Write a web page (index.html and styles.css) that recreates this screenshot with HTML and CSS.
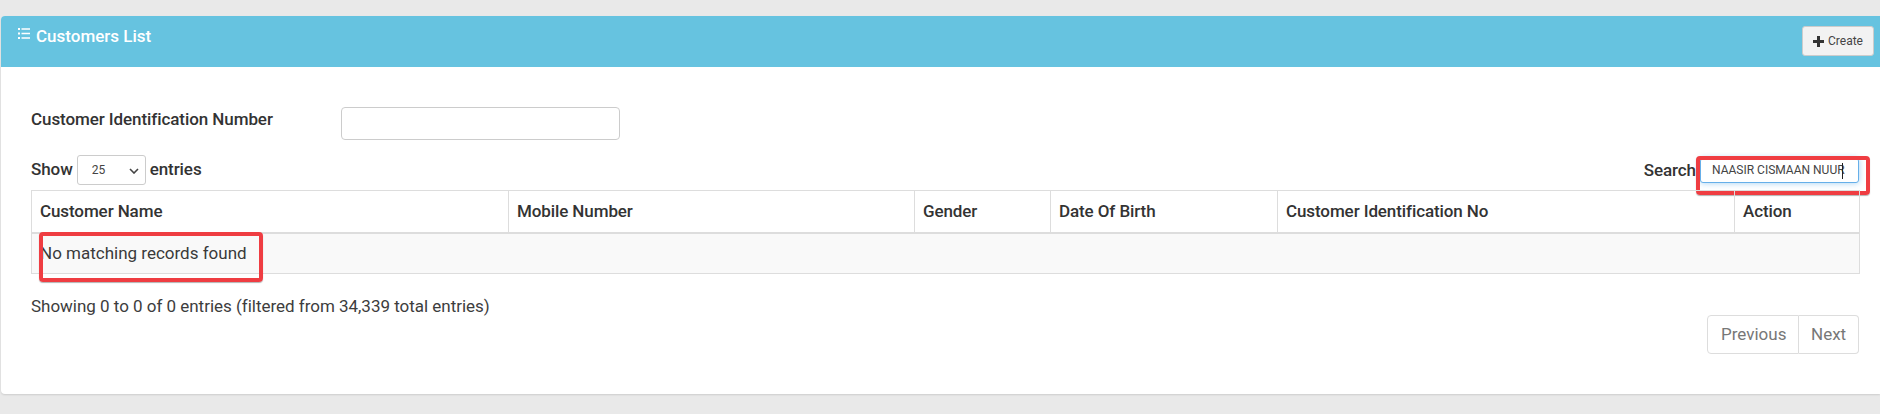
FILE: index.html
```html
<!DOCTYPE html>
<html lang="en">
<head>
<meta charset="utf-8">
<title>Customers List</title>
<link rel="stylesheet" href="styles.css">
</head>
<body>
<main class="card">
  <header class="card-head">
    <h1 class="card-title">
      <svg class="list-icon" width="12" height="11" viewBox="0 0 12 11" aria-hidden="true"><path fill="#fff" d="M0 0h2v2H0zM3.500 .2H12v1.600H3.500zM0 4.500h2v2H0zM3.500 4.700H12v1.600H3.500zM0 9h2v2H0zM3.500 9.200H12v1.600H3.500z"/></svg>
      Customers List
    </h1>
    <button class="btn-create" type="button">
      <svg width="11" height="11" viewBox="0 0 11 11" aria-hidden="true"><path fill="#333" d="M4 0h3v4h4v3H7v4H4V7H0V4h4z"/></svg>
      Create
    </button>
  </header>
  <div class="card-body">
    <div class="filter-row">
      <label class="filter-label" for="cid">Customer Identification Number</label>
      <input class="filter-input" id="cid" type="text">
    </div>
    <div class="tools-row">
      <div class="length">
        <span>Show</span>
        <span class="select-wrap">
          <select class="length-select"><option>25</option></select>
          <svg class="chevron" width="10" height="6" viewBox="0 0 10 6" aria-hidden="true"><path fill="none" stroke="#444" stroke-width="1.600" d="M1 1l4 4 4-4"/></svg>
        </span>
        <span>entries</span>
      </div>
      <div class="search">
        <span>Search</span>
        <span class="search-wrap">
          <input class="search-input" type="text" value="NAASIR CISMAAN NUUR">
          <span class="caret"></span>
        </span>
        <span class="mark mark-search"></span>
      </div>
    </div>
    <div class="table-wrap">
      <table class="data-table">
        <colgroup>
          <col class="c1"><col class="c2"><col class="c3"><col class="c4"><col class="c5"><col class="c6">
        </colgroup>
        <thead>
          <tr>
            <th>Customer Name</th>
            <th>Mobile Number</th>
            <th>Gender</th>
            <th>Date Of Birth</th>
            <th>Customer Identification No</th>
            <th>Action</th>
          </tr>
        </thead>
        <tbody>
          <tr><td colspan="6">No matching records found</td></tr>
        </tbody>
      </table>
      <span class="mark mark-empty"></span>
    </div>
    <p class="info">Showing 0 to 0 of 0 entries (filtered from 34,339 total entries)</p>
    <nav class="pager">
      <a class="page">Previous</a>
      <a class="page">Next</a>
    </nav>
  </div>
</main>
</body>
</html>
```
FILE: styles.css
```css
* { box-sizing: border-box; }
html, body { margin: 0; height: 414px; overflow: hidden; }
body {
  background: #e9e9e9;
  padding: 16px 0 0 1px;
  font-family: Roboto, "Liberation Sans", sans-serif;
  font-size: 17px;
  color: #333;
}
.card {
  height: 378px;
  background: #fff;
  border-radius: 4px 0 0 4px;
  box-shadow: 0 1px 2px rgba(0,0,0,.12);
  overflow: hidden;
}
.card-head {
  height: 51px;
  background: #66c3e0;
  display: flex;
  justify-content: space-between;
  align-items: flex-start;
  padding: 10px 6px 0 17px;
}
.card-title {
  margin: 0;
  display: flex;
  align-items: flex-start;
  gap: 6px;
  font-size: 17px;
  font-weight: 500;
  line-height: 20px;
  color: #fff;
}
.list-icon { margin-top: 2px; }
.btn-create {
  width: 72px;
  height: 30px;
  background: #f2f2f2;
  border: 1px solid #ccc;
  border-radius: 3px;
  display: flex;
  align-items: center;
  justify-content: center;
  gap: 4px;
  padding: 0;
  font: 12px Roboto, sans-serif;
  color: #444;
}
.card-body { padding: 39px 21px 0 30px; position: relative; }
.filter-row { display: flex; align-items: flex-start; height: 34px; padding-top: 1px; }
.filter-label {
  width: 310px;
  font-weight: 500;
  line-height: 24px;
  letter-spacing: -.08px;
}
.filter-input {
  width: 279px;
  height: 33px;
  border: 1px solid #ccc;
  border-radius: 4px;
  background: #fff;
}
.tools-row {
  margin-top: 15px;
  height: 35px;
  display: flex;
  justify-content: space-between;
  align-items: flex-start;
  font-weight: 500;
  letter-spacing: -.08px;
}
.length { display: flex; align-items: center; gap: 4px; height: 30px; line-height: 26px; padding-bottom: 2px; }
.select-wrap { position: relative; display: block; height: 30px; margin-top: 2px; }
.length-select {
  appearance: none;
  width: 69px;
  height: 30px;
  border: 1px solid #ccc;
  border-radius: 3px;
  background: #fff;
  padding: 0 0 0 14px;
  font: 12px Roboto, sans-serif;
  color: #444;
}
.chevron { position: absolute; right: 7px; top: 13px; pointer-events: none; }
.search { display: flex; align-items: center; gap: 4px; height: 30px; position: relative; line-height: 26px; }
.search-wrap { position: relative; display: block; }
.search-input {
  display: block;
  width: 159px;
  height: 25px;
  border: 1px solid #66afe9;
  border-radius: 3px;
  outline: 0;
  box-shadow: 0 0 6px rgba(102,175,233,.6);
  padding: 0 0 0 11px;
  font: 12px Roboto, sans-serif;
  color: #444;
}
.caret {
  position: absolute;
  left: 142px;
  top: 5px;
  width: 1px;
  height: 16px;
  background: #222;
}
.mark {
  position: absolute;
  border: 4px solid #ef3d42;
  border-radius: 4px;
  pointer-events: none;
  box-shadow: 0 1px 1px rgba(0,0,0,.3);
}
.mark-search { right: -11px; top: 1px; width: 174px; height: 39px; }
.table-wrap { position: relative; }
.data-table {
  width: 1828px;
  table-layout: fixed;
  border-collapse: collapse;
  border: 1px solid #ddd;
}
.c1 { width: 477px; }
.c2 { width: 406px; }
.c3 { width: 136px; }
.c4 { width: 227px; }
.c5 { width: 457px; }
.c6 { width: 125px; }
.data-table th {
  height: 42px;
  padding: 0 8px;
  text-align: left;
  font-weight: 500;
  letter-spacing: -.1px;
  border: 1px solid #ddd;
  border-bottom: 2px solid #ddd;
}
.data-table td {
  height: 41px;
  padding: 0 8px;
  background: #f9f9f9;
  border: 1px solid #ddd;
  color: #3a3a3a;
}
.mark-empty { left: 8px; top: 42px; width: 224px; height: 50px; }
.info { margin: 21px 0 0; line-height: 22px; color: #3d3d3d; letter-spacing: -.02px; }
.pager { display: flex; justify-content: flex-end; margin-top: -2px; }
.page {
  height: 39px;
  display: flex;
  align-items: center;
  padding: 0 0 2px 13px;
  border: 1px solid #ddd;
  color: #777;
}
.page:first-child { border-radius: 4px 0 0 4px; width: 92px; }
.page:last-child { border-radius: 0 4px 4px 0; border-left: 0; width: 60px; padding-left: 12px; }
```
